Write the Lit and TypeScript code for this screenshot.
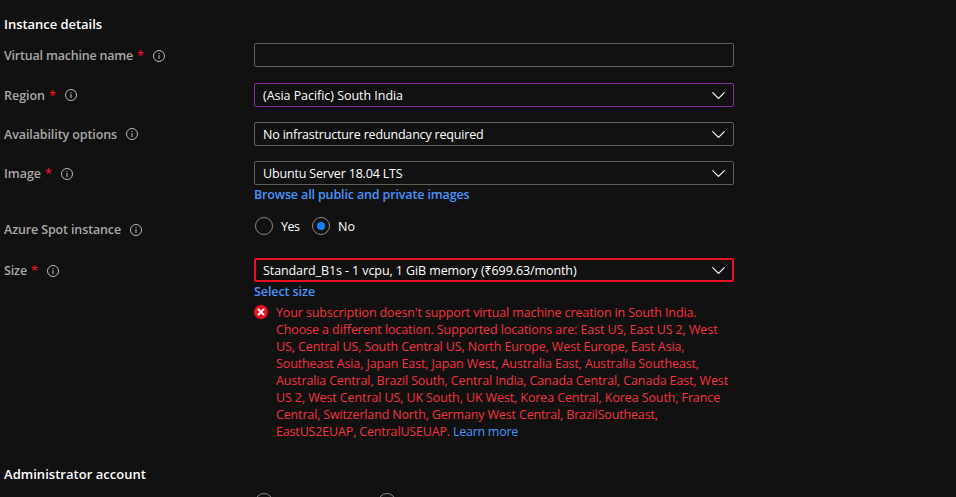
import { LitElement, html, css, nothing } from "lit";
import { customElement } from "lit/decorators.js";
import { classMap } from "lit/directives/class-map.js";

const spaced = (text: string, tracking: number) =>
  html`<span style="letter-spacing:${tracking}px">${text}</span>`;

const infoIcon = html`<svg class="info" viewBox="0 0 12 12" width="12" height="12">
  <circle cx="6" cy="6" r="5.5" fill="none" stroke="#b8b8b8" />
  <path d="M6 3v1.1M6 5v4" fill="none" stroke="#999" stroke-width="1.3" />
</svg>`;

const chevron = html`<svg class="chevron" viewBox="0 0 13 7" width="13" height="7">
  <path d="M0.4 0.4L6.5 6.4L12.6 0.4" fill="none" stroke="#fff" stroke-width="1.15" />
</svg>`;

const errorIcon = html`<svg class="error-icon" viewBox="0 0 14 14" width="14" height="14">
  <circle cx="7" cy="7" r="7" fill="#e81123" />
  <path d="M3.9 3.9L10.1 10.1M10.1 3.9L3.9 10.1" stroke="#fff" stroke-width="2" />
</svg>`;

const errorLines: [string, number][] = [
  ["Your subscription doesn't support virtual machine creation in South India.", -0.118],
  ["Choose a different location. Supported locations are: East US, East US 2, West", -0.097],
  ["US, Central US, South Central US, North Europe, West Europe, East Asia,", -0.118],
  ["Southeast Asia, Japan East, Japan West, Australia East, Australia Southeast,", -0.115],
  ["Australia Central, Brazil South, Central India, Canada Central, Canada East, West", -0.14],
  ["US 2, West Central US, UK South, UK West, Korea Central, Korea South, France", -0.113],
  ["Central, Switzerland North, Germany West Central, BrazilSoutheast,", -0.155],
];

@customElement("app-root")
export class AppRoot extends LitElement {
  static styles = css`
    :host {
      display: block;
      box-sizing: border-box;
      height: 497px;
      overflow: hidden;
      padding: 15px 0 0 4px;
      background: #111;
      color: #fff;
      font: 400 12.5px/18px "Open Sans", "Noto Sans", sans-serif;
      white-space: nowrap;
    }
    h2 { margin: 0; font-size: 13px; line-height: 18px; font-weight: 600; }
    .row { display: grid; grid-template-columns: 250px 480px; align-items: start; }
    .name { margin-top: 10px; }
    .region { margin-top: 16px; }
    .availability, .image { margin-top: 15px; }
    .spot { margin-top: 13px; }
    .size { margin-top: 17px; }
    .label {
      box-sizing: border-box;
      display: flex;
      align-items: flex-start;
      height: 24px;
      padding-top: 4px;
      color: #a8a8a8;
      font-weight: 600;
    }
    .star { width: 6px; margin-left: 4px; color: #e81123; }
    .info { display: block; margin: 3px 0 0 9px; }
    .star + .info { margin-left: 10px; }
    .region .info, .availability .info { margin-top: 2px; }
    .box {
      box-sizing: border-box;
      display: flex;
      align-items: center;
      justify-content: space-between;
      height: 24px;
      padding: 1px 8px 0;
      border: 1px solid #605e5c;
      border-radius: 2px;
    }
    .box.changed { border-color: #8a2da5; }
    .box.invalid { padding: 1px 7px 0; border: 2px solid #e81123; }
    .chevron { display: block; }
    .link { display: block; padding-top: 1px; color: #4894fe; font-weight: 600; line-height: 18px; }
    .radios { display: flex; align-items: center; height: 18px; padding-left: 1px; }
    .radio {
      box-sizing: border-box;
      display: flex;
      align-items: center;
      justify-content: center;
      flex: none;
      width: 18px;
      height: 18px;
      border: 1px solid #8a8886;
      border-radius: 50%;
    }
    .radio.on::after { content: ""; width: 8px; height: 8px; border-radius: 50%; background: #0a85ff; }
    .yes, .no { margin-left: 8px; padding-top: 1px; }
    .yes { width: 31px; }
    .error { display: flex; margin-top: 3px; color: #f5323e; line-height: 17px; }
    .error-icon { flex: none; margin: 1px 8px 0 0; }
    .line { height: 17px; }
    .more { color: #4894fe; margin-left: 3px; }
    .admin { margin-top: 25px; }
    .auth { display: flex; gap: 105px; margin: 10px 0 0 251px; }
  `;

  private row(kind: string, text: string, tracking: number, required: boolean, content: unknown) {
    return html`<div class="row ${kind}">
      <div class="label">
        ${spaced(text, tracking)}${required ? html`<span class="star">*</span>` : nothing}${infoIcon}
      </div>
      <div>${content}</div>
    </div>`;
  }

  private select(text: string, tracking: number, state = "") {
    return html`<div class=${classMap({ box: true, changed: state === "changed", invalid: state === "invalid" })}>
      ${spaced(text, tracking)}${chevron}
    </div>`;
  }

  render() {
    return html`
      <h2>${spaced("Instance details", -0.041)}</h2>
      ${this.row("name", "Virtual machine name", -0.203, true, html`<div class="box"></div>`)}
      ${this.row("region", "Region", -0.028, true, this.select("(Asia Pacific) South India", -0.042, "changed"))}
      ${this.row("availability", "Availability options", -0.101, false,
        this.select("No infrastructure redundancy required", -0.18))}
      ${this.row("image", "Image", -0.024, true, html`
        ${this.select("Ubuntu Server 18.04 LTS", -0.172)}
        <a class="link">${spaced("Browse all public and private images", -0.138)}</a>`)}
      ${this.row("spot", "Azure Spot instance", -0.135, false, html`
        <div class="radios">
          <span class="radio"></span><span class="yes">${spaced("Yes", -0.5)}</span>
          <span class="radio on"></span><span class="no">No</span>
        </div>`)}
      ${this.row("size", "Size", -0.135, true, html`
        ${this.select("Standard_B1s - 1 vcpu, 1 GiB memory (₹699.63/month)", -0.09, "invalid")}
        <a class="link">${spaced("Select size", -0.083)}</a>
        <div class="error">
          ${errorIcon}
          <div>
            ${errorLines.map(([text, tracking]) => html`<div class="line">${spaced(text, tracking)}</div>`)}
            <div class="line">${spaced("EastUS2EUAP, CentralUSEUAP.", -0.161)}<a class="more">${spaced("Learn more", -0.273)}</a></div>
          </div>
        </div>`)}
      <h2 class="admin">${spaced("Administrator account", 0.032)}</h2>
      <div class="auth"><span class="radio"></span><span class="radio"></span></div>
    `;
  }
}
